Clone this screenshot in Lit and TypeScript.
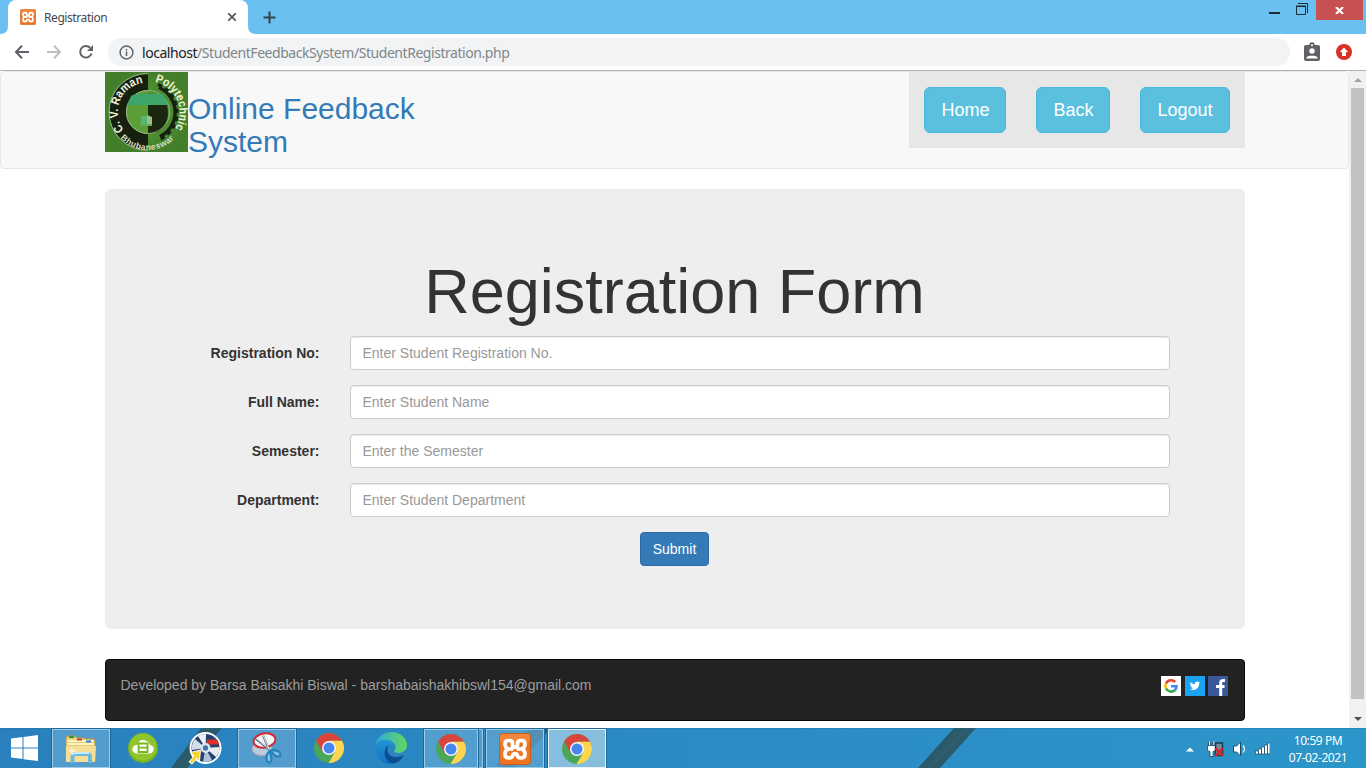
import { LitElement, html, css } from "lit";
import { customElement } from "lit/decorators.js";

const chrome = () => html`<svg width="30" height="30" viewBox="0 0 30 30">
  <circle cx="15" cy="15" r="15" fill="#4ba65a"/>
  <path d="M2.1 7.4A15 15 0 0 1 28 7.7H15L8.7 18.9Z" fill="#d9453c"/>
  <path d="M28 7.7A15 15 0 0 1 14.6 30L21.3 18.6 15 7.7Z" fill="#fdd551"/>
  <circle cx="15" cy="15" r="7" fill="#f6f6f6"/><circle cx="15" cy="15" r="5.5" fill="#4587f0"/></svg>`;

const xampp = (size: number) => html`<svg width=${size} height=${size} viewBox="0 0 32 32">
  <rect x=".5" y=".5" width="31" height="31" rx="3" fill="#ee7422" stroke="#c85d18"/>
  <path d="M1 4Q1 1 4 1H28Q31 1 31 4V8Q16 13 1 9Z" fill="#f49450" opacity=".6"/>
  <g fill="none" stroke="#fff" stroke-width="3.700" stroke-linejoin="round" stroke-linecap="round">
  <path d="M13.500 13V10.500Q13.500 7.500 10.500 7.500H9.500Q6 7.500 6 11Q6 14.500 9 16Q6 17.500 6 21Q6 25 10 25Q13.500 25 14 21.500Q16 20 18 21.500Q18.500 25 22 25Q26 25 26 21Q26 17.500 23 16Q26 14.500 26 11Q26 7.500 22.500 7.500H21.500Q18.500 7.500 18.500 10.500V13Q16 15 13.500 13"/>
  <path d="M9.500 16H13M19 16H22.500"/></g></svg>`;

@customElement("browser-bar")
class BrowserBar extends LitElement {
  static styles = css`
    :host { display: block; height: 71px; box-sizing: border-box; border-bottom: 1px solid #b3b3b3; background: #fff; font-family: "Noto Sans", sans-serif; }
    .strip { height: 34px; background: #6ac1f1; display: flex; }
    .tab { width: 240px; margin-left: 8px; background: #fff; border-radius: 8px 8px 0 0; display: flex; align-items: center; padding: 0 12px; box-sizing: border-box; font-size: 12px; color: #45494d; }
    .name { flex: 1; margin-left: 8px; letter-spacing: -.42px; }
    .feet { width: 256px; height: 34px; margin-right: -256px; }
    .plus { margin: 11px 0 0 15px; }
    .win { margin-left: auto; display: flex; align-items: flex-start; }
    .close { width: 47px; height: 20px; margin-right: 3px; background: #c75050; display: flex; justify-content: center; align-items: center; }
    .tools { height: 36px; display: flex; align-items: center; }
    .nav { display: flex; width: 108px; }
    .url { width: 1182px; height: 28px; border-radius: 14px; background: #f1f3f4; display: flex; align-items: center; padding-left: 11px; box-sizing: border-box; font-size: 14px; color: #80868b; white-space: nowrap; }
    .addr { margin-left: 8px; letter-spacing: -.45px; }
    .host { color: #202124; }
    .ext { margin-left: 13px; }
    .up { margin-left: 15px; }
    svg { display: block; flex: none; }
  `;
  render() {
    return html`<div class="strip">
      <svg class="feet" viewBox="0 0 256 34"><path d="M0 34Q8 34 8 26V34ZM248 26Q248 34 256 34H248Z" fill="#fff"/></svg>
      <div class="tab">${xampp(16)}<span class="name">Registration</span>
        <svg width="8" height="8" viewBox="0 0 8 8"><path d="M0 0L8 8M8 0L0 8" stroke="#50555a" stroke-width="1.7"/></svg></div>
      <svg class="plus" width="13" height="13" viewBox="0 0 13 13"><path d="M6.500 .5V12.500M.5 6.500H12.500" stroke="#33414a" stroke-width="2"/></svg>
      <div class="win"><svg width="48" height="20" viewBox="0 0 48 20"><path d="M1 13H12" stroke="#1d2b33" stroke-width="2"/><path d="M30 3.500H39.500V13" stroke="#1d2b33" fill="none"/><path d="M28.500 6.500H37.500V14.500H28.500ZM28 6H38" stroke="#1d2b33" fill="none"/></svg>
      <div class="close"><svg width="9" height="7" viewBox="0 0 9 7"><path d="M1 0L8 7M8 0L1 7" stroke="#fff" stroke-width="2.200"/></svg></div></div>
    </div>
    <div class="tools">
      <div class="nav"><svg width="108" height="28" viewBox="0 0 108 28" fill="none" stroke-width="2">
        <path d="M29 14H16.500M22 7.800L16 14L22 20.200" stroke="#5f6368"/>
        <path d="M47 14H59.500M54 7.800L60 14L54 20.200" stroke="#bdc0c4"/>
        <path d="M90.200 9.800A5.800 5.800 0 1 0 91.500 15.500" stroke="#5f6368"/><path d="M93 7V13H87Z" fill="#5f6368"/></svg></div>
      <div class="url"><svg width="15" height="15" viewBox="0 0 15 15" fill="none" stroke="#5f6368" stroke-width="1.500"><circle cx="7.500" cy="7.500" r="6.400"/><path d="M7.500 6.500V11M7.500 4V5.500"/></svg>
        <span class="addr"><span class="host">localhost</span>/StudentFeedbackSystem/StudentRegistration.php</span></div>
      <svg class="ext" width="18" height="20" viewBox="0 0 18 20"><path d="M3 3H6.300A2.700 2.700 0 0 1 11.700 3H15A2 2 0 0 1 17 5V17A2 2 0 0 1 15 19H3A2 2 0 0 1 1 17V5A2 2 0 0 1 3 3Z" fill="#5f6368"/><circle cx="9" cy="3.200" r="1" fill="#fff"/><circle cx="9" cy="9" r="2.700" fill="#fff"/><path d="M3.500 16.500V15.500C3.500 13 14.500 13 14.500 15.500V16.500Z" fill="#fff"/></svg>
      <svg class="up" width="16" height="16" viewBox="0 0 16 16"><circle cx="8" cy="8" r="8" fill="#d93025"/><path d="M8 3.500L12.200 8H10V12H6V8H3.800Z" fill="#fff"/></svg>
    </div>`;
  }
}

@customElement("college-logo")
class CollegeLogo extends LitElement {
  static styles = css`
    :host { display: block; width: 83px; height: 80px; }
    svg { display: block; }
    .lt { font: bold 12px "Liberation Sans", sans-serif; fill: #eef3dc; }
    .sm { font: bold 8.5px "Liberation Sans", sans-serif; fill: #d7dfbe; }
  `;
  render() {
    return html`<svg width="83" height="80" viewBox="0 0 83 80">
      <defs><radialGradient id="g"><stop offset="0" stop-color="#5ca33a"/><stop offset="1" stop-color="#437f2b"/></radialGradient>
      <path id="left" d="M19 58A29 29 0 0 1 41 11"/><path id="right" d="M50 10A31 31 0 0 1 69 58"/><path id="bottom" d="M15.500 66A37 37 0 0 0 71 65"/></defs>
      <rect width="83" height="80" fill="url(#g)"/>
      <path d="M43 1.500A39 38.500 0 0 0 43 78.500Z" fill="#17200f"/>
      <path d="M43 1.500A39 38.500 0 0 0 43 78.500" fill="none" stroke="#a3b888"/>
      <path d="M43 18A22 22 0 0 0 43 62Z" fill="#5b9e38"/>
      <path d="M43 33H62Q66 52 53 60L43 62Z" fill="#1b270f"/>
      <path d="M43 18.500A21.500 21.500 0 0 0 43 61.500" fill="none" stroke="#9ab881"/>
      <path d="M54 15.500A27 27 0 0 1 55 64.500" fill="none" stroke="#17200f" stroke-width="3.500"/>
      <path d="M53 12.500A30 30 0 0 1 55 67.500" fill="none" stroke="#17200f" stroke-width="3" stroke-dasharray="4.500 3.500"/>
      <path d="M43 18.500A21.500 21.500 0 0 1 43 61.500" fill="none" stroke="#a5bc8d" stroke-width=".8"/>
      <path d="M26 24L30 22H58L63 33H22Z" fill="#40a56b"/>
      <path d="M36 44H42V52H36Z" fill="#53b778"/><path d="M42 43L47 45V53H42Z" fill="#a0bd86"/>
      <path d="M35 53H47" stroke="#62a95c" stroke-width="2"/>
      <text class="lt"><textPath href="#left" textLength="61" lengthAdjust="spacingAndGlyphs">C. V. Raman</textPath></text>
      <text class="lt"><textPath href="#right" textLength="59" lengthAdjust="spacingAndGlyphs">Polytechnic</textPath></text>
      <text class="sm"><textPath href="#bottom" textLength="60">Bhubaneswar</textPath></text>
    </svg>`;
  }
}

@customElement("feedback-page")
class FeedbackPage extends LitElement {
  static styles = css`
    :host { display: flex; height: 657px; background: #fff; font: 14px/20px "Liberation Sans", Arial, sans-serif; color: #333; overflow: hidden; }
    * { box-sizing: border-box; }
    .body { width: 1349px; }
    .wrap { width: 1140px; margin: 0 auto; }
    .navbar { height: 98px; border: 1px solid #e7e7e7; border-radius: 4px; background: #f8f8f8; margin-bottom: 20px; }
    .navin { display: flex; justify-content: space-between; align-items: flex-start; }
    .brand { display: flex; }
    .title { margin: 20px 0 0; padding-left: .5px; font-size: 30px; line-height: 33px; font-weight: 400; color: #337ab7; width: 262px; }
    .links { background: #e7e7e7; padding: 15px; display: flex; gap: 30px; }
    .btn { height: 46px; border: 1px solid #46b8da; background: #5bc0de; color: #fff; border-radius: 6px; padding: 0 16px; font: 18px/24px "Liberation Sans", sans-serif; }
    .jumbo { height: 440px; border-radius: 6px; background: #eee; padding: 68px 60px 0; margin-bottom: 30px; }
    .head { margin: 0 0 10px; font-size: 63px; line-height: 69px; font-weight: 400; text-align: center; }
    .row { display: flex; height: 34px; margin-bottom: 15px; }
    .label { width: 170px; padding: 7px 15px 0 0; text-align: right; font-weight: 700; }
    .field { width: 820px; margin-left: 15px; height: 34px; border: 1px solid #ccc; border-radius: 4px; padding: 6px 12px; font: 14px/20px "Liberation Sans", sans-serif; background: #fff; box-shadow: inset 0 1px 1px rgba(0,0,0,.075); }
    .field::placeholder { color: #999; opacity: 1; }
    .center { display: flex; justify-content: center; }
    .submit { height: 34px; border: 1px solid #2e6da4; background: #337ab7; color: #fff; border-radius: 4px; padding: 0 12px; font: 14px/20px "Liberation Sans", sans-serif; }
    .foot { height: 62px; border: 1px solid #080808; border-radius: 4px; background: #222; color: #9d9d9d; display: flex; justify-content: space-between; padding: 15px 15.5px 0 15px; }
    .social { display: flex; gap: 3.5px; padding-top: 1px; }
    .scroll { width: 17px; background: #f1f1f1; display: flex; flex-direction: column; align-items: center; }
    .thumb { width: 13px; height: 611px; background: #c1c1c1; }
    svg { display: block; }
  `;
  render() {
    const rows = [["Registration No:", "Enter Student Registration No."], ["Full Name:", "Enter Student Name"], ["Semester:", "Enter the Semester"], ["Department:", "Enter Student Department"]];
    return html`<div class="body">
      <div class="navbar"><div class="wrap navin">
        <div class="brand"><college-logo></college-logo><h2 class="title">Online Feedback System</h2></div>
        <div class="links">${["Home", "Back", "Logout"].map((t) => html`<button class="btn">${t}</button>`)}</div>
      </div></div>
      <div class="wrap jumbo"><h1 class="head">Registration Form</h1>
        ${rows.map(([l, p]) => html`<div class="row"><label class="label">${l}</label><input class="field" placeholder=${p} /></div>`)}
        <div class="center"><button class="submit">Submit</button></div>
      </div>
      <div class="wrap foot"><span>Developed by Barsa Baisakhi Biswal - barshabaishakhibswl154@gmail.com</span>
        <div class="social">
          <svg width="20" height="20" viewBox="0 0 20 20"><path fill="#fff" d="M0 0H20V20H0Z"/><g fill="none" stroke-width="2.600"><path d="M14.200 6A5.600 5.600 0 0 0 5 7.500" stroke="#ea4335"/><path d="M5 7.500A5.600 5.600 0 0 0 5 12.500" stroke="#fbbc05"/><path d="M5 12.500A5.600 5.600 0 0 0 13.800 14.200" stroke="#34a853"/><path d="M13.800 14.200A5.600 5.600 0 0 0 15.500 10.200H10" stroke="#4285f4"/></g></svg>
          <svg width="20" height="20" viewBox="0 0 20 20"><path fill="#1da1f2" d="M0 0H20V20H0Z"/><path transform="translate(4.800 4.600) scale(.43)" fill="#fff" d="M23.950 4.570a10 10 0 0 1-2.820.77 4.960 4.960 0 0 0 2.160-2.720 9.900 9.900 0 0 1-3.120 1.180 4.920 4.920 0 0 0-8.380 4.480C7.690 8.090 4.070 6.130 1.640 3.160a4.920 4.920 0 0 0 1.520 6.570 4.900 4.900 0 0 1-2.230-.61v.06a4.920 4.920 0 0 0 3.950 4.830 5 5 0 0 1-2.210.08 4.930 4.930 0 0 0 4.600 3.420A9.870 9.870 0 0 1 0 19.540a14 14 0 0 0 7.550 2.210c9.050 0 14-7.500 14-13.980l-.02-.63a9.940 9.940 0 0 0 2.420-2.570z"/></svg>
          <svg width="20" height="20" viewBox="0 0 20 20"><path fill="#3b5998" d="M0 0H20V20H0Z"/><path d="M17 4.500H15.200Q12.700 4.500 12.700 7V20M8 10.500H16.500" stroke="#fff" stroke-width="3" fill="none"/></svg>
        </div></div>
    </div>
    <div class="scroll"><svg width="17" height="17" viewBox="0 0 17 17"><path d="M5 11L9 7L13 11Z" fill="#a3a3a3"/></svg><div class="thumb"></div>
      <svg width="17" height="29" viewBox="0 0 17 29"><path d="M5 18L9 22L13 18Z" fill="#505050"/></svg></div>`;
  }
}

@customElement("task-bar")
class TaskBar extends LitElement {
  static styles = css`
    :host { display: flex; height: 40px; font-family: "Noto Sans", sans-serif; background: linear-gradient(90deg, #2a80bd, #2b8bc5 50%, #2b96c9); position: relative; }
    .streaks { position: absolute; left: 0; top: 0; }
    .items { display: flex; position: relative; }
    .item { width: 58px; height: 40px; display: flex; align-items: center; justify-content: center; box-sizing: border-box; flex: none; }
    .open { background: #62a8d4b5; border: 1px solid #9bcbe7; outline: 1px solid #1e6799; height: 39px; margin-top: 1px; }
    .start { width: 52px; padding-right: 3px; }
    .green { width: 66px; }
    .disc { width: 58px; }
    .snip { margin-left: 4px; }
    .c1 { width: 60px; margin-left: 3px; }
    .edge { width: 62px; margin-left: 1px; }
    .group { width: 54px; margin-left: 2px; }
    .stack { width: 4px; margin-left: 1px; border-left: 0; }
    .xa { margin-left: 3px; width: 58px; }
    .active { background: #87bede; border-color: #e6f3fa; width: 58px; margin-left: 4px; }
    .tray { margin-left: auto; display: flex; position: relative; }
    .clock { width: 96px; text-align: center; color: #fff; font-size: 12px; line-height: 17px; padding-top: 4px; letter-spacing: -.42px; box-sizing: border-box; }
    svg { display: block; flex: none; }
  `;
  render() {
    return html`<svg class="streaks" width="1366" height="40" viewBox="0 0 1366 40">
        <g fill="#2b5a6b"><path d="M201 0H222L187 40H171Z"/><path d="M530 0H551L514 40H493Z"/><path d="M954 0H976L940 40H918Z"/></g><path d="M966 2L930 39" stroke="#305e70" stroke-width="3"/>
        <path d="M0 .5H1366" stroke="#236f9e" opacity=".35"/></svg>
      <div class="items">
        <div class="item start"><svg width="27" height="27" viewBox="0 0 27 27" fill="#fff"><path d="M0 3.500L11.500 2V12.500H0ZM12.500 1.900L27 0V12.500H12.500ZM0 13.500H11.500V24L0 22.500ZM12.500 13.500H27V26L12.500 24.200Z"/></svg></div>
        <div class="item open"><svg width="34" height="30" viewBox="0 0 34 30">
          <path d="M2 4Q2 2 4 2H11L13 4H20L22 5H29Q31 5 31 8V27H2Z" fill="#e8cd7c" stroke="#b8984a"/>
          <path d="M3 7H30M3 10H30" stroke="#fff3bd" stroke-width="2"/><path d="M5 3H10" stroke="#2c9a3b" stroke-width="2"/><path d="M13 5.500H18" stroke="#d63b2f" stroke-width="2"/><path d="M22 7.500H27" stroke="#2587dc" stroke-width="2"/>
          <path d="M2 12H32L31 28H2Z" fill="#f4df96"/><path d="M8.500 29V23Q8.500 20 11.500 20H23Q26 20 26 23V29" fill="none" stroke="#6db9dc" stroke-width="4"/><path d="M9 20.500Q10 18.500 13 19H25" fill="none" stroke="#c6edf9" stroke-width="2"/><path d="M8 13V21M5 17H12" stroke="#fff" stroke-width="1"/></svg></div>
        <div class="item green"><svg width="30" height="30" viewBox="0 0 30 30"><circle cx="15" cy="15" r="15" fill="#79b51c"/><circle cx="15" cy="14" r="13.500" fill="#91c52d"/><path d="M9 20.500Q4 20 4.500 15.500Q5 12 9 12Q12 4.500 18.500 8Q21 9 22 12Q26.500 13 25.500 17Q24.500 20.500 21 20.500Z" fill="#fff"/><path d="M10.500 10.500H19.500V19H10.500ZM11 14.700H19" fill="none" stroke="#79b51c" stroke-width="1.800"/></svg></div>
        <div class="item disc"><svg width="34" height="36" viewBox="0 0 34 36"><circle cx="17.500" cy="18" r="15" fill="#26416d" stroke="#fff" stroke-width="2"/><path d="M17.500 18L10 6A14 14 0 0 1 18 4Z" fill="#edf2f7"/><path d="M17.500 18L19 9.500H29A14 14 0 0 1 31 14.500H20Z" fill="#dc302f"/><path d="M17.500 18L31.500 17A14 14 0 0 1 28 27Z" fill="#e5ecf2"/><path d="M17.500 18L24 30A14 14 0 0 1 15 32Z" fill="#b1c3db"/><path d="M17.500 18L4 20A14 14 0 0 1 7 9Z" fill="#d3deeb"/><circle cx="17.500" cy="18" r="5" fill="#dce7f2"/><circle cx="17.500" cy="18" r="2.700" fill="#4674a6"/><path d="M12.500 20L11.500 31L9 28L4 34L1 32L6 26L2.500 22.500Z" fill="#f5d42c" stroke="#fff"/></svg></div>
        <div class="item open snip"><svg width="32" height="33" viewBox="0 0 32 33"><ellipse cx="11" cy="17" rx="10" ry="6.500" fill="#b7cde0" stroke="#ce9ca6"/><ellipse cx="13.500" cy="8.500" rx="11" ry="7" transform="rotate(-10 13.500 8.500)" fill="#f3f5f7" stroke="#d52830" stroke-width="2"/><path d="M5 7L21 20M12 3.500L19 20" stroke="#5d6b77" stroke-width="2"/><path d="M5 6L20 19M12 3L19 19" stroke="#e3e9ee"/><path d="M19 19Q14 23 16 29Q19 33 20.500 27ZM20 18.500Q24 26 29 24Q31 19 22 18Z" fill="#8ec6e5" stroke="#2783bd" stroke-width="2.300"/></svg></div>
        <div class="item c1">${chrome()}</div>
        <div class="item edge"><svg width="32" height="32" viewBox="0 0 32 32"><defs><linearGradient id="eg"><stop stop-color="#2da9dd"/><stop offset="1" stop-color="#67d85b"/></linearGradient><linearGradient id="eb" x2="0" y2="1"><stop stop-color="#2396d5"/><stop offset="1" stop-color="#176fc0"/></linearGradient></defs><path d="M.5 13C2 5 9 0 16.500 0C26 0 32 7 32 13C32 20 24 22.500 19.500 20C18.500 19 20.500 18 20.500 15C20 9 9 4 .5 13Z" fill="url(#eg)"/><path d="M.5 14C3 6 16 6 20 13C13 11 9 18 12 24C15 30 22 30 20 31C9 35-1 26 .5 14Z" fill="url(#eb)"/><path d="M13.500 13C9 23 19 28 29 23C24 32 17 33 13 29C8 24 9 16 13.500 13Z" fill="#0c4f91"/></svg></div>
        <div class="item open group">${chrome()}</div><div class="item open stack"></div>
        <div class="item open xa">${xampp(32)}</div>
        <div class="item open active">${chrome()}</div>
      </div>
      <div class="tray"><svg width="92" height="40" viewBox="0 0 92 40">
        <path d="M8 23.500L12 19.500L16 23.500Z" fill="#fff"/>
        <path d="M31.500 14V18M36 14V18" stroke="#17455c" stroke-width="3"/><path d="M31.500 13.500V18M36 13.500V18" stroke="#fff" stroke-width="1.200"/><path d="M29.500 17.500H37.500V22Q37.500 23.500 35 23.500V28.500H32V23.500Q29.500 23.500 29.500 22Z" fill="#fff" stroke="#17455c" stroke-width=".8"/>
        <path d="M37.500 15H44.500V27.500H37.500Z" fill="#738b98" stroke="#143e53" stroke-width="1.500"/><path d="M37.500 20L45 28M45 20L37.500 28" stroke="#de2027" stroke-width="2.300"/>
        <path d="M55.500 18H58.500L62.500 14V28L58.500 24H55.500Z" fill="#fff" stroke="#174e67"/><path d="M65 17.500Q68 21 65 24.500" fill="none" stroke="#fff" stroke-width="1.200"/>
        <g fill="#fff" stroke="#174e67" stroke-width=".7"><path d="M77.500 23H80.500V26H77.500ZM80.500 21H83.500V26H80.500ZM83.500 19H86.500V26H83.500ZM86.500 17H89.500V26H86.500ZM89.500 15H92V26H89.500Z"/></g></svg>
        <div class="clock">10:59 PM<br />07-02-2021</div></div>`;
  }
}

@customElement("app-root")
class AppRoot extends LitElement {
  static styles = css`:host { display: block; width: 1366px; height: 768px; overflow: hidden; }`;
  render() {
    return html`<browser-bar></browser-bar><feedback-page></feedback-page><task-bar></task-bar>`;
  }
}
